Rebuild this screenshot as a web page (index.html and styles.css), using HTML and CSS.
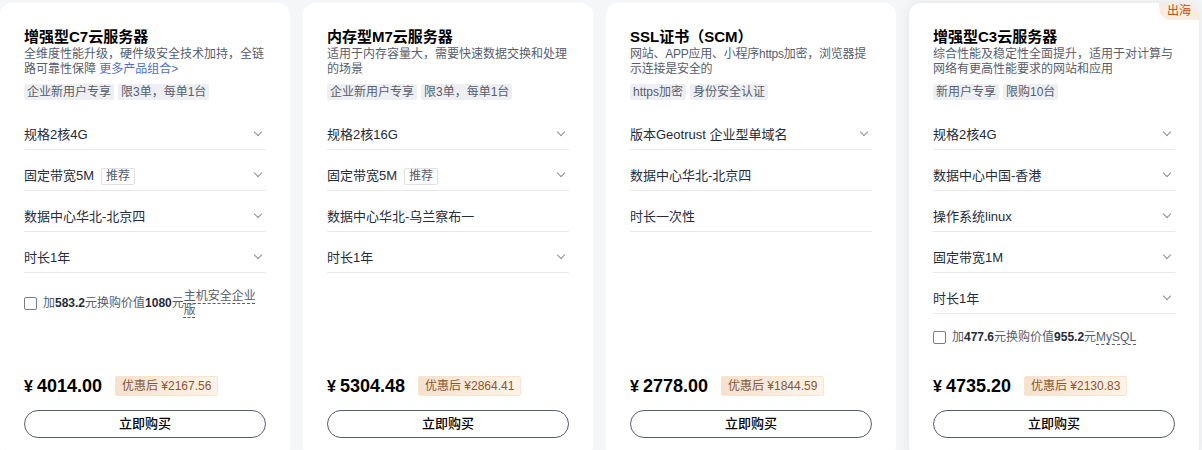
FILE: index.html
```html
<!DOCTYPE html>
<html lang="zh-CN">
<head>
<meta charset="utf-8">
<title>产品</title>
<link rel="stylesheet" href="styles.css">
</head>
<body>
<div class="cards">
  <div class="card">
    <div class="title">增强型C7云服务器</div>
    <div class="desc">全维度性能升级，硬件级安全技术加持，全链路可靠性保障 <a class="more">更多产品组合&gt;</a></div>
    <div class="tags"><span class="tag">企业新用户专享</span><span class="tag">限3单，每单1台</span></div>
    <div class="opt"><span class="opt-text">规格2核4G</span><span class="chev"></span></div>
    <div class="opt"><span class="opt-text">固定带宽5M<span class="rec">推荐</span></span><span class="chev"></span></div>
    <div class="opt"><span class="opt-text">数据中心华北-北京四</span><span class="chev"></span></div>
    <div class="opt"><span class="opt-text">时长1年</span><span class="chev"></span></div>
    <div class="addon"><span class="box"></span><span class="addon-text">加<b>583.2</b>元换购价值<b>1080</b>元</span><span class="addon-name">主机安全企业版</span></div>
    <div class="foot">
      <div class="price-row"><span class="price"><span class="yen">¥</span>4014.00</span><span class="deal">优惠后 ¥2167.56</span></div>
      <div class="buy">立即购买</div>
    </div>
  </div>
  <div class="card">
    <div class="title">内存型M7云服务器</div>
    <div class="desc">适用于内存容量大，需要快速数据交换和处理的场景</div>
    <div class="tags"><span class="tag">企业新用户专享</span><span class="tag">限3单，每单1台</span></div>
    <div class="opt"><span class="opt-text">规格2核16G</span><span class="chev"></span></div>
    <div class="opt"><span class="opt-text">固定带宽5M<span class="rec">推荐</span></span><span class="chev"></span></div>
    <div class="opt"><span class="opt-text">数据中心华北-乌兰察布一</span></div>
    <div class="opt"><span class="opt-text">时长1年</span><span class="chev"></span></div>
    <div class="foot">
      <div class="price-row"><span class="price"><span class="yen">¥</span>5304.48</span><span class="deal">优惠后 ¥2864.41</span></div>
      <div class="buy">立即购买</div>
    </div>
  </div>
  <div class="card">
    <div class="title">SSL证书（SCM）</div>
    <div class="desc tight">网站、APP应用、小程序https加密，浏览器提示连接是安全的</div>
    <div class="tags"><span class="tag">https加密</span><span class="tag">身份安全认证</span></div>
    <div class="opt"><span class="opt-text">版本Geotrust 企业型单域名</span><span class="chev"></span></div>
    <div class="opt"><span class="opt-text">数据中心华北-北京四</span></div>
    <div class="opt"><span class="opt-text">时长一次性</span></div>
    <div class="foot">
      <div class="price-row"><span class="price"><span class="yen">¥</span>2778.00</span><span class="deal">优惠后 ¥1844.59</span></div>
      <div class="buy">立即购买</div>
    </div>
  </div>
  <div class="card card-hover">
    <span class="badge">出海</span>
    <div class="title">增强型C3云服务器</div>
    <div class="desc">综合性能及稳定性全面提升，适用于对计算与网络有更高性能要求的网站和应用</div>
    <div class="tags"><span class="tag">新用户专享</span><span class="tag">限购10台</span></div>
    <div class="opt"><span class="opt-text">规格2核4G</span><span class="chev"></span></div>
    <div class="opt"><span class="opt-text">数据中心中国-香港</span><span class="chev"></span></div>
    <div class="opt"><span class="opt-text">操作系统linux</span><span class="chev"></span></div>
    <div class="opt"><span class="opt-text">固定带宽1M</span><span class="chev"></span></div>
    <div class="opt"><span class="opt-text">时长1年</span><span class="chev"></span></div>
    <div class="addon single"><span class="box"></span><span class="addon-text">加<b>477.6</b>元换购价值<b>955.2</b>元</span><span class="addon-name">MySQL</span></div>
    <div class="foot">
      <div class="price-row"><span class="price"><span class="yen">¥</span>4735.20</span><span class="deal">优惠后 ¥2130.83</span></div>
      <div class="buy">立即购买</div>
    </div>
  </div>
</div>
</body>
</html>
```

FILE: styles.css
```css
html, body {
  margin: 0;
  padding: 0;
  background: #f5f6f8;
  overflow: hidden;
  height: 450px;
}
body {
  font-family: "Liberation Sans", "Noto Sans CJK SC", sans-serif;
  color: #252b3a;
}
.cards {
  display: flex;
  gap: 13px;
  padding-top: 3px;
}
.card {
  position: relative;
  flex: 0 0 290px;
  width: 290px;
  height: 455px;
  box-sizing: border-box;
  padding: 24px 24px 20px 24px;
  background: #fff;
  border-radius: 12px;
  display: flex;
  flex-direction: column;
}
.card-hover {
  box-shadow: 0 0 14px rgba(0, 0, 0, 0.07);
}
.badge {
  position: absolute;
  top: 0;
  right: 0;
  width: 40px;
  height: 17px;
  line-height: 17px;
  text-align: center;
  font-size: 12px;
  color: #b5561c;
  background: #f8ebdf;
  border-radius: 0 12px 0 12px;
}
.title {
  font-size: 15px;
  line-height: 20px;
  font-weight: bold;
  color: #000;
}
.desc {
  font-size: 12px;
  line-height: 15px;
  color: #575d6c;
}
.desc.tight {
  letter-spacing: -0.25px;
}
.more {
  display: inline-block;
  line-height: 15px;
  height: 15px;
  color: #526ecc;
}
.tags {
  display: flex;
  gap: 4px;
  margin-top: 7px;
}
.tag {
  height: 16px;
  line-height: 16px;
  padding: 0 3px;
  font-size: 12px;
  color: #575d6c;
  background: #eeeff2;
  border-radius: 2px;
}
.tags + .opt {
  margin-top: 9px;
}
.opt {
  display: flex;
  align-items: center;
  justify-content: space-between;
  padding: 16px 0 4px 0;
  line-height: 20px;
  height: 20px;
  border-bottom: 1px solid #e6e8ec;
  font-size: 13px;
}
.opt-text {
  display: flex;
  align-items: center;
}
.rec {
  margin-left: 7px;
  height: 15px;
  line-height: 15px;
  padding: 0 4px;
  font-size: 12px;
  color: #575d6c;
  border: 1px solid #dfe1e6;
  border-radius: 2px;
}
.chev {
  width: 5px;
  height: 5px;
  margin-right: 5px;
  margin-top: -6px;
  border-right: 1px solid #8a8e99;
  border-bottom: 1px solid #8a8e99;
  transform: rotate(45deg);
}
.addon {
  display: flex;
  align-items: center;
  padding: 16px 8px 0 0;
  font-size: 12px;
  line-height: 14px;
  color: #575d6c;
}
.addon b {
  color: #252b3a;
}
.box {
  flex: 0 0 auto;
  width: 11px;
  height: 11px;
  border: 1px solid #7a7e89;
  border-radius: 2px;
  margin-right: 6px;
}
.addon-text {
  flex: 0 0 auto;
  white-space: nowrap;
}
.addon-name {
  flex: 0 1 auto;
  text-decoration: underline dashed #575d6c;
  text-underline-offset: 3px;
}
.foot {
  margin-top: auto;
}
.price-row {
  display: flex;
  align-items: center;
  height: 20px;
}
.price {
  font-size: 18px;
  font-weight: bold;
  color: #000;
  line-height: 20px;
}
.yen {
  font-size: 16px;
  margin-right: 4px;
}
.deal {
  margin-left: 13px;
  height: 18px;
  line-height: 18px;
  padding: 0 6px;
  font-size: 12px;
  color: #8a5634;
  background: linear-gradient(90deg, #f5e1cf, #fff4e8);
  border: 1px solid #fbe4cc;
  border-radius: 2px;
}
.buy {
  margin-top: 14px;
  height: 26px;
  line-height: 26px;
  text-align: center;
  font-size: 13px;
  font-weight: 500;
  color: #000;
  border: 1px solid #575d6c;
  border-radius: 14px;
}
```
